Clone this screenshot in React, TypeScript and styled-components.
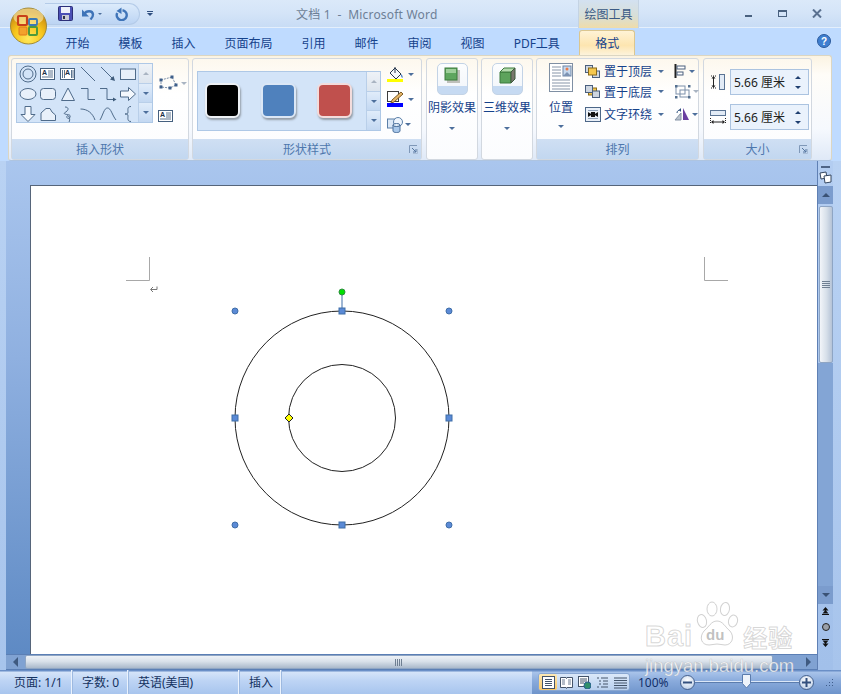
import React, { type FC, type ReactNode } from 'react'
import styled, { createGlobalStyle } from 'styled-components'

const GlobalStyle = createGlobalStyle`
  html, body {
    margin: 0;
    height: 100%;
    overflow: hidden;
  }
  * {
    box-sizing: border-box;
  }
`

const Window = styled.div`
  color: #15428b;
  display: flex;
  flex-direction: column;
  font-family: 'Noto Sans', 'Noto Sans CJK SC', sans-serif;
  font-size: 12px;
  height: 694px;
  overflow: hidden;
  position: relative;
  width: 841px;
`

/* title row */
const TitleBar = styled.div`
  align-items: center;
  background: linear-gradient(#dbe9f9, #d5e5f8 45%, #c8dcf5);
  border-bottom: 1px solid #e4effc;
  display: flex;
  flex: none;
  height: 28px;
  padding-left: 45px;
`

const OfficeButton = styled.div`
  border-radius: 50%;
  height: 38px;
  left: 10px;
  position: absolute;
  top: 7px;
  width: 37px;
  z-index: 3;
`

const QuickAccess = styled.div`
  align-items: center;
  background: linear-gradient(#dcebfb, #bcd4f3);
  border: 1px solid #b4cbe8;
  border-left: 0;
  border-radius: 0 12px 12px 0;
  display: flex;
  height: 22px;
  padding-left: 13px;
  width: 95px;
`

const UndoSlot = styled.div`
  align-items: center;
  display: flex;
  gap: 3px;
  margin-left: 8px;
`

const RedoSlot = styled.div`
  margin-left: 12px;
`

const QatMenu = styled.div`
  align-items: center;
  display: flex;
  flex-direction: column;
  margin-left: 7px;
  row-gap: 1px;
`

const QatMenuBar = styled.span`
  background: #2f4f80;
  height: 1px;
  width: 6px;
`

const Title = styled.div`
  color: #6d7f96;
  font-size: 12px;
  letter-spacing: 0.2px;
  margin-left: 143px;
  white-space: pre;
  width: 282px;
`

const ContextTab = styled.div`
  align-items: center;
  background: linear-gradient(#d3e1f1, #d8dfd8 55%, #efdcaa);
  border-left: 1px solid #c4d3e3;
  border-right: 1px solid #c4d3e3;
  color: #3a5a85;
  display: flex;
  height: 28px;
  justify-content: center;
  width: 61px;
`

const WindowButtons = styled.div`
  align-items: center;
  display: flex;
  margin-left: 92px;
`

const WindowButton = styled.div`
  align-items: center;
  display: flex;
  height: 20px;
  justify-content: center;
  width: 34.5px;
`

/* tabs */
const TabRow = styled.div`
  align-items: flex-end;
  background: #bfdbff;
  display: flex;
  flex: none;
  height: 27px;
  padding-left: 51px;
  position: relative;
`

const Tab = styled.div`
  align-items: center;
  display: flex;
  height: 25px;
  padding: 0 14.5px;
`

const ActiveTab = styled(Tab)`
  background: linear-gradient(#fff3d6, #fde5b0 60%, #fdf3dc);
  border: 1px solid #dbc68f;
  border-bottom: 0;
  border-radius: 3px 3px 0 0;
  justify-content: center;
  margin-left: 5px;
  padding: 0;
  width: 56px;
`

const HelpSlot = styled.div`
  position: absolute;
  right: 10px;
  top: 6px;
`

/* ribbon */
const RibbonFrame = styled.div`
  background: #bfdbff;
  flex: none;
  height: 106px;
  padding: 0 9px 0 8px;
`

const Ribbon = styled.div`
  background: linear-gradient(#fbf3e2, #fffdf8 18%, #f6f9fe 70%, #dfe9f7);
  border: 1px solid #dcd6c2;
  border-bottom-color: #aec4e0;
  border-radius: 3px;
  display: flex;
  height: 106px;
  padding: 2px 2px;
`

const Group = styled.div<{ $w: number; $gap?: number }>`
  background: linear-gradient(#fdf8ee, #ffffff 35%, #fbfcfe);
  border: 1px solid #d2d8e0;
  border-radius: 3px;
  display: flex;
  flex: none;
  flex-direction: column;
  height: 102px;
  margin-right: ${(p) => p.$gap ?? 3}px;
  position: relative;
  width: ${(p) => p.$w}px;
`

const GroupBody = styled.div`
  display: flex;
  flex: 1;
  min-height: 0;
`

const GroupLabel = styled.div`
  align-items: center;
  background: linear-gradient(#cfdff3, #c2d7f0);
  color: #4d77ad;
  display: flex;
  flex: none;
  height: 20px;
  justify-content: center;
`

const Launcher = styled.div`
  bottom: 5px;
  height: 9px;
  position: absolute;
  right: 3px;
  width: 9px;
`

const Gallery = styled.div<{ $w: number; $h: number; $ml: number; $mt: number }>`
  background: #d3e4f8;
  border: 1px solid #aec8e6;
  display: flex;
  flex: none;
  height: ${(p) => p.$h}px;
  margin: ${(p) => p.$mt}px 0 0 ${(p) => p.$ml}px;
  width: ${(p) => p.$w}px;
`

const ShapeGrid = styled.div`
  display: grid;
  flex: 1;
  grid-template-columns: repeat(6, 20px);
  grid-template-rows: repeat(3, 20px);
  padding-left: 1px;
`

const ShapeCell = styled.div`
  align-items: center;
  display: flex;
  justify-content: center;
`

const GalleryScroll = styled.div`
  border-left: 1px solid #b9cfe9;
  display: flex;
  flex: none;
  flex-direction: column;
  width: 14px;
`

const ScrollStep = styled.div<{ $muted?: boolean }>`
  align-items: center;
  background: ${(p) =>
    p.$muted ? 'linear-gradient(#eef2f7, #dde5ee)' : 'linear-gradient(#e0ecfa, #c3d8f2)'};
  border-bottom: 1px solid #b9cfe9;
  display: flex;
  flex: 1;
  justify-content: center;
  &:last-child {
    border-bottom: 0;
  }
`

const Triangle = styled.span<{ $up?: boolean; $color?: string; $size?: number }>`
  border-left: ${(p) => p.$size ?? 3}px solid transparent;
  border-right: ${(p) => p.$size ?? 3}px solid transparent;
  ${(p) => (p.$up ? 'border-bottom' : 'border-top')}: ${(p) => p.$size ?? 3}px solid ${(p) => p.$color ?? '#4d6f9c'};
  display: inline-block;
  flex: none;
  height: 0;
  width: 0;
`

const ToolColumn = styled.div`
  align-items: flex-start;
  display: flex;
  flex-direction: column;
  padding: 15px 0 0 5px;
  row-gap: 17px;
`

const ToolLine = styled.div<{ $gap?: number }>`
  align-items: center;
  display: flex;
  gap: ${(p) => p.$gap ?? 3}px;
`

const SwatchRow = styled.div`
  align-items: center;
  display: flex;
  flex: 1;
  gap: 21px;
  padding: 0 0 2px 7px;
`

const Swatch = styled.div<{ $fill: string; $ring: string }>`
  background: ${(p) => p.$fill};
  border: 2px solid ${(p) => p.$ring};
  border-radius: 6px;
  box-shadow: 1px 2px 2px rgba(70, 70, 70, 0.45);
  height: 35px;
  width: 35px;
`

const PaintColumn = styled.div`
  align-items: flex-start;
  display: flex;
  flex-direction: column;
  margin-left: 6px;
  padding-top: 7px;
  row-gap: 9px;
`

const EffectButton = styled.div`
  align-items: center;
  display: flex;
  flex: 1;
  flex-direction: column;
  padding-top: 4px;
`

const PositionButton = styled(EffectButton)`
  flex: none;
  margin-left: 12px;
`

const EffectFace = styled.div`
  align-items: flex-start;
  background: linear-gradient(#fcfdfe 0, #f4f7fb 72%, #c6daf2 72%);
  border: 1px solid #c3d3e6;
  border-radius: 5px;
  display: flex;
  height: 32px;
  justify-content: center;
  padding-top: 3px;
  width: 31px;
`

const EffectText = styled.div`
  line-height: 14px;
  margin-top: 6px;
  white-space: nowrap;
`

const PositionText = styled(EffectText)`
  margin-top: 8px;
`

const ArrowSlot = styled.div`
  display: flex;
  justify-content: center;
  margin-top: 12px;
`

const PositionArrow = styled(ArrowSlot)`
  margin-top: 10px;
`

const ArrangeRows = styled.div`
  align-items: center;
  column-gap: 3px;
  display: grid;
  grid-template-columns: 16px 48px 12px 24px;
  grid-template-rows: 20px 21px 24px;
  margin-left: 12px;
  padding-top: 2px;
`

const ArrowCell = styled.div`
  display: flex;
  justify-content: center;
`

const IconWithArrow = styled.div`
  align-items: center;
  display: flex;
  gap: 2px;
  margin-left: 4px;
`

const SizeRows = styled.div`
  display: flex;
  flex: 1;
  flex-direction: column;
  padding: 10px 2px 0 6px;
  row-gap: 9px;
`

const SizeRow = styled.div`
  align-items: center;
  display: flex;
  justify-content: space-between;
`

const SizeInput = styled.div`
  align-items: center;
  background: #eaf2fc;
  border: 1px solid #abc3e0;
  color: #222;
  display: flex;
  height: 26px;
  justify-content: space-between;
  padding: 0 5px 0 3px;
  width: 79px;
`

const Spinner = styled.div`
  display: flex;
  flex-direction: column;
  margin-right: 2px;
  row-gap: 7px;
`

/* workspace */
const Workspace = styled.div`
  background: linear-gradient(#b9d2f3, #a7c4ec);
  display: flex;
  flex: 1;
  min-height: 0;
  padding: 0 8px 0 6px;
`

const MainPane = styled.div`
  display: flex;
  flex: 1;
  flex-direction: column;
  min-width: 0;
`

const DocArea = styled.div`
  background: linear-gradient(#aac6ee, #8fb0e0 40%, #5e8ac4);
  flex: 1;
  min-height: 0;
  padding: 24px 0 0 24px;
`

const Page = styled.div`
  background: #fff;
  border-left: 1px solid #56657a;
  border-top: 1px solid #56657a;
  height: 100%;
`

const Drawing = styled.svg`
  display: block;
  height: 100%;
  width: 100%;
`

const HScroll = styled.div`
  align-items: stretch;
  background: #80a2d2;
  border-bottom: 1px solid #5b7fb5;
  border-top: 1px solid #5b7fb5;
  display: flex;
  flex: none;
  height: 16px;
`

const HArrow = styled.div`
  align-items: center;
  display: flex;
  flex: none;
  justify-content: center;
  width: 18px;
`

const SideTriangle = styled.span<{ $left?: boolean }>`
  border-bottom: 5px solid transparent;
  border-top: 5px solid transparent;
  ${(p) => (p.$left ? 'border-right' : 'border-left')}: 5px solid #3f5a80;
  display: inline-block;
  height: 0;
  width: 0;
`

const HThumb = styled.div`
  align-items: center;
  background: linear-gradient(#eef2f7, #d9e1ea 45%, #aab9cb);
  border: 1px solid #8ea5c4;
  border-radius: 2px;
  display: flex;
  justify-content: center;
  margin-left: 1px;
  width: 748px;
`

const HTrack = styled.div`
  flex: 1;
`

const Grip = styled.div<{ $vertical?: boolean }>`
  background: repeating-linear-gradient(
    ${(p) => (p.$vertical ? '0deg' : '90deg')},
    #6f7f92 0 1px,
    transparent 1px 2px
  );
  height: 7px;
  width: 8px;
`

const VScroll = styled.div`
  align-items: center;
  background: linear-gradient(#b3cdf1, #a2c0ea);
  border-left: 1px solid #5f80b4;
  display: flex;
  flex: none;
  flex-direction: column;
  width: 16px;
`

const SplitBar = styled.div`
  background: #4f6587;
  flex: none;
  height: 2px;
  margin-top: 5px;
  width: 9px;
`

const RulerIcon = styled.div`
  flex: none;
  height: 13px;
  margin-top: 3px;
`

const VArrowBox = styled.div<{ $top?: boolean }>`
  align-items: center;
  background: #7b9ccd;
  display: flex;
  flex: none;
  height: 18px;
  justify-content: center;
  margin-top: ${(p) => (p.$top ? '2px' : '0')};
  width: 100%;
`

const VThumb = styled.div`
  align-items: center;
  background: linear-gradient(90deg, #f2f5f9, #d6dfe9 55%, #b5c3d6);
  border: 1px solid #8ea5c4;
  border-radius: 2px;
  display: flex;
  flex: none;
  height: 157px;
  justify-content: center;
  margin-top: 2px;
  width: 14px;
`

const VTrack = styled.div`
  background: #83a5d5;
  flex: 1;
  width: 100%;
`

const BrowseGroup = styled.div`
  align-items: center;
  display: flex;
  flex: none;
  flex-direction: column;
  height: 66px;
  padding-top: 3px;
  row-gap: 8px;
  width: 100%;
`

/* status bar */
const StatusBar = styled.div`
  background: linear-gradient(#6a8fc7 0, #6a8fc7 1px, #d5e4f9 2px, #bdd4f4 45%, #a8c5ee);
  color: #15325f;
  display: flex;
  flex: none;
  height: 24px;
`

const StatusCell = styled.div<{ $w: number; $pad?: number }>`
  align-items: center;
  border-right: 1px solid #eaf2fd;
  box-shadow: 1px 0 0 #9db9e0;
  display: flex;
  flex: none;
  padding-left: ${(p) => p.$pad ?? 10}px;
  width: ${(p) => p.$w}px;
`

const StatusRight = styled.div`
  align-items: center;
  background: linear-gradient(#6a8fc7 0, #6a8fc7 1px, #a9c4ea 2px, #8aabdc 45%, #6e94cb);
  display: flex;
  flex: 1;
  margin-left: 251px;
  padding-left: 6px;
`

const ViewButtons = styled.div`
  background: linear-gradient(#dbe8f9, #b9d0ef);
  border: 1px solid #89a7d2;
  border-radius: 3px;
  display: flex;
  flex: none;
  height: 18px;
  width: 92px;
`

const ViewButton = styled.div<{ $active?: boolean }>`
  align-items: center;
  background: ${(p) => (p.$active ? 'linear-gradient(#fde9b5, #fbc765)' : 'transparent')};
  border-radius: 2px;
  display: flex;
  flex: 1;
  justify-content: center;
`

const ZoomText = styled.div`
  color: #12306a;
  font-size: 12px;
  margin-left: 8px;
  width: 42px;
`

const ZoomCircle = styled.div`
  align-items: center;
  background: radial-gradient(circle at 50% 35%, #fff, #c9d8ec 70%, #8ea8cc);
  border: 1px solid #46618d;
  border-radius: 50%;
  display: flex;
  flex: none;
  height: 15px;
  justify-content: center;
  width: 15px;
`

const ZoomTrack = styled.div`
  background: #dbe7f7;
  border-bottom: 1px solid #5b7cad;
  flex: none;
  height: 2px;
  position: relative;
  width: 104px;
`

const ZoomThumb = styled.div`
  left: 47px;
  position: absolute;
  top: -7px;
`

const ResizeGrip = styled.div`
  margin-left: 10px;
`

/* watermark */
const Watermark = styled.div`
  color: rgba(255, 255, 255, 0.82);
  display: flex;
  flex-direction: column;
  font-family: 'Liberation Sans', sans-serif;
  left: 645px;
  pointer-events: none;
  position: absolute;
  top: 600px;
  width: 155px;
  z-index: 4;
`

const LogoLine = styled.div`
  align-items: flex-end;
  display: flex;
  height: 51px;
  position: relative;
`

const LogoText = styled.span`
  -webkit-text-stroke: 1px rgba(140, 140, 140, 0.35);
  font-size: 29px;
  font-weight: 700;
  letter-spacing: 1px;
  line-height: 29px;
`

const LogoCjk = styled(LogoText)`
  font-family: 'Noto Sans CJK SC', sans-serif;
  font-size: 24px;
  letter-spacing: 1px;
  margin-left: 2px;
`

const PawSlot = styled.div`
  height: 50px;
  margin: 0 2px;
  width: 44px;
`

const DomainText = styled.div`
  -webkit-text-stroke: 0.6px rgba(140, 140, 140, 0.35);
  font-size: 18.5px;
  line-height: 24px;
  margin-top: 3px;
  white-space: nowrap;
`

const IconSvg = styled.svg`
  display: block;
  flex: none;
`

/* drawings */
const Ico: FC<{ w?: number; h?: number; children: ReactNode }> = ({ w = 18, h = 18, children }) => (
  <IconSvg width={w} height={h} viewBox={`0 0 ${w} ${h}`} fill="none">
    {children}
  </IconSvg>
)

const LINE = '#4f6b8a'

const TextBoxGlyph: FC<{ vertical?: boolean }> = ({ vertical }) => (
  <Ico w={16} h={14}>
    <rect x=".5" y="1.5" width="14" height="11" fill="#fff" stroke="#45607f" />
    {vertical ? (
      <path d="M2.5 3v8M4.5 3v8M11.5 3v8M13 3v8" stroke="#5c7590" />
    ) : (
      <path d="M8 4h5M8 6h5M8 8h5M2 10h11" stroke="#5c7590" />
    )}
    <text x={vertical ? 5 : 2} y="8" fontSize="7" fontWeight="700" fontFamily="Liberation Sans" fill="#1d2f48">
      A
    </text>
  </Ico>
)

const shapes: ReactNode[] = [
  <Ico key="donut"><circle cx="9" cy="9" r="8" stroke={LINE} /><circle cx="9" cy="9" r="5" stroke={LINE} /></Ico>,
  <TextBoxGlyph key="text" />,
  <TextBoxGlyph key="vtext" vertical />,
  <Ico key="line"><path d="M2 2l14 14" stroke={LINE} /></Ico>,
  <Ico key="arrow"><path d="M2 2l13 13" stroke={LINE} /><path d="M16 16l-5-1.5 3.5-3.5z" fill="#3d5a7a" /></Ico>,
  <Ico key="rect"><rect x="1.5" y="4" width="15" height="10.5" fill="#e8f0fa" stroke={LINE} /></Ico>,
  <Ico key="ellipse"><ellipse cx="9" cy="9" rx="8" ry="5.5" fill="#e8f0fa" stroke={LINE} /></Ico>,
  <Ico key="round"><rect x="1.5" y="3.5" width="15" height="11" rx="3" fill="#e8f0fa" stroke={LINE} /></Ico>,
  <Ico key="tri"><path d="M9 3l6.5 12.5h-13z" fill="#e8f0fa" stroke={LINE} /></Ico>,
  <Ico key="elbow"><path d="M2 3.5h7v11h7" stroke={LINE} /></Ico>,
  <Ico key="elbow2"><path d="M1 3.5h7v11h7" stroke={LINE} /><path d="M17.5 14.5l-3.5-2v4z" fill="#3d5a7a" /></Ico>,
  <Ico key="block"><path d="M1.5 6h8V2.5l7 6.5-7 6.5V12h-8z" fill="#f4f8fd" stroke={LINE} /></Ico>,
  <Ico key="down"><path d="M6 1.5h6v8h4l-7 7-7-7h4z" fill="#f4f8fd" stroke={LINE} /></Ico>,
  <Ico key="snip"><path d="M2 15.5V8l5-4.5h4l2 3.5 3.5 3v5.5z" fill="#e8f0fa" stroke={LINE} /></Ico>,
  <Ico key="squiggle"><path d="M6 2c3 0 4 2 2 4S4 8 6 9s6 0 5 3-4 1-3-1 4 3 2 6" stroke={LINE} /></Ico>,
  <Ico key="arc"><path d="M1.5 4c7 0 12 4 14.5 11" stroke={LINE} /></Ico>,
  <Ico key="curve"><path d="M1 15C4 10 5 3 8.5 3S13 10 17 15" stroke={LINE} /></Ico>,
  <Ico key="brace"><path d="M12 1.5C8 1.5 9 5 9 7S8 9 6 9c2 0 3 0 3 2s-1 5.5 3 5.5" stroke={LINE} /></Ico>,
]

const SaveIcon = () => (
  <Ico w={15} h={15}>
    <rect x=".5" y=".5" width="14" height="14" rx="1" fill="#4b50b5" stroke="#2c2f78" />
    <rect x="3" y="1" width="9" height="6" fill="#eef1fa" />
    <rect x="4" y="9" width="7" height="5" fill="#c9ccd6" />
    <rect x="5" y="10" width="2" height="3" fill="#30344a" />
  </Ico>
)

const UndoIcon = () => (
  <Ico w={14} h={14}>
    <path d="M3.5 7C5 3.500 11.500 3 12 7.500c.2 2-1 3.500-2.500 5" stroke="#3f74b8" strokeWidth="2.4" />
    <path d="M1 2.500v7h7z" fill="#3f74b8" />
  </Ico>
)

const RedoIcon = () => (
  <Ico w={14} h={14}>
    <path d="M8.500 3.200A5 5 0 1 1 3.200 6" stroke="#3f74b8" strokeWidth="2.4" />
    <path d="M7.500 .5v6.500l-5-3z" fill="#3f74b8" />
  </Ico>
)

const OfficeLogo = () => (
  <Ico w={37} h={38}>
    <defs>
      <radialGradient id="orb" cx="50%" cy="85%" r="75%">
        <stop offset="0" stopColor="#ffe95c" />
        <stop offset=".55" stopColor="#f7c51c" />
        <stop offset="1" stopColor="#c98a10" />
      </radialGradient>
    </defs>
    <circle cx="18.5" cy="19" r="18" fill="url(#orb)" stroke="#9f8a3a" />
    <ellipse cx="18.5" cy="10" rx="15" ry="8.5" fill="#fff6c4" opacity=".55" />
    <rect x="8" y="9" width="9" height="9" rx="1" fill="none" stroke="#c8401a" strokeWidth="2.2" />
    <rect x="19" y="12" width="8" height="6" rx="1" fill="none" stroke="#3a79b6" strokeWidth="1.8" />
    <rect x="9" y="20" width="8" height="8" rx="1" fill="#f3a22c" stroke="#e07a1c" />
    <rect x="19" y="20" width="8" height="8" rx="1" fill="none" stroke="#4f9a3b" strokeWidth="2" />
  </Ico>
)

const EditPoints = () => (
  <Ico w={20} h={18}>
    <path d="M3 6l11-3 4 8-6 3-9-1z" stroke="#7a8ea8" strokeDasharray="2 1" />
    {[[3, 6], [14, 3], [18, 11], [12, 14], [3, 13]].map(([x, y]) => (
      <rect key={`${x}-${y}`} x={x - 1.5} y={y - 1.5} width="3" height="3" fill="#3e5f8a" />
    ))}
  </Ico>
)

const Launch = () => (
  <Ico w={9} h={9}>
    <path d="M.5 8V.5H8" stroke="#7f98b8" />
    <path d="M3 3l4 4M7 4v3H4" stroke="#55759e" />
    <path d="M8.5 4v4.5H4" stroke="#a9bdd6" />
  </Ico>
)

const Bucket = () => (
  <Ico w={17} h={16}>
    <path d="M3 7l5-5 6 6-5 5z" fill="#f5f7fb" stroke="#26364c" />
    <path d="M8 7V1" stroke="#26364c" />
    <path d="M14 8c1.5 1 2 3 1.5 4-1-.5-2-2-1.500-4z" fill="#4a7fc1" />
    <rect y="13" width="16" height="3" fill="#ffff00" />
  </Ico>
)

const Pen = () => (
  <Ico w={17} h={16}>
    <rect x=".5" y=".5" width="11" height="10" fill="#fff" stroke="#3c3c3c" />
    <path d="M5 9l9-8 2 2-9 8-3 1z" fill="#e6b66a" stroke="#7c5a22" />
    <rect y="12" width="16" height="4" fill="#0000ff" />
  </Ico>
)

const Cylinder = () => (
  <Ico w={17} h={17}>
    <rect x=".5" y="3" width="9" height="9" fill="#dbe8f7" stroke="#5b7fa8" />
    <circle cx="11" cy="6" r="4.5" fill="#eef5fd" stroke="#5b7fa8" />
    <path d="M6 9v6c0 2 7 2 7 0V9c0 2-7 2-7 0z" fill="#a9c8ea" stroke="#4a6f9c" />
    <ellipse cx="9.5" cy="9" rx="3.5" ry="1.5" fill="#e4eff9" stroke="#4a6f9c" />
  </Ico>
)

const ShadowSquare = () => (
  <Ico w={17} h={17}>
    <rect x="3" y="3" width="13" height="13" fill="#a8a8a0" opacity=".7" />
    <rect x="1" y="1" width="12" height="12" fill="#5ea65e" stroke="#3c7a3c" />
    <rect x="2" y="2" width="10" height="4" fill="#9ecf9a" />
  </Ico>
)

const Cube = () => (
  <Ico w={17} h={17}>
    <path d="M1 5h11v11H1z" fill="#5da35c" stroke="#3c7a3c" />
    <path d="M1 5l4-4h11l-4 4z" fill="#b5dcae" stroke="#3c7a3c" />
    <path d="M12 5l4-4v11l-4 4z" fill="#78766c" stroke="#3c5a3c" />
  </Ico>
)

const PositionIcon = () => (
  <Ico w={24} h={30}>
    <rect x=".5" y=".5" width="23" height="28" fill="#fff" stroke="#7f8fa3" />
    <path d="M3 4h9M3 7h9M3 10h9M3 13h9M3 17h18M3 20h18M3 23h18M3 26h18" stroke="#8795a8" />
    <rect x="14" y="3" width="8" height="10" fill="#c7d9ee" stroke="#6e86a6" />
    <circle cx="18" cy="6" r="1.5" fill="#e97b4a" />
    <path d="M14 13l4-4 4 4z" fill="#7d93b3" />
  </Ico>
)

const LayerIcon: FC<{ front: boolean }> = ({ front }) => (
  <Ico w={15} h={13}>
    {front ? (
      <>
        <rect x=".5" y=".5" width="7" height="7" fill="#cfd6df" stroke="#4a5f7d" />
        <rect x="7.5" y="6" width="7" height="6.5" fill="#cfd6df" stroke="#4a5f7d" />
        <rect x="3.5" y="3" width="8" height="7" fill="#f5c84e" stroke="#8a6a1a" />
      </>
    ) : (
      <>
        <rect x="3.5" y="3" width="8" height="7" fill="#f5c84e" stroke="#8a6a1a" />
        <rect x=".5" y=".5" width="7" height="7" fill="#cfd6df" stroke="#4a5f7d" />
        <rect x="7.5" y="6" width="7" height="6.5" fill="#cfd6df" stroke="#4a5f7d" />
      </>
    )}
  </Ico>
)

const WrapIcon = () => (
  <Ico w={16} h={15}>
    <rect x=".5" y=".5" width="15" height="14" fill="#eaf0f8" stroke="#4d6788" />
    <path d="M3 3.5h10M3 11.5h10" stroke="#8fa1b8" />
    <path d="M3 5l4 2.5L3 10zM13 5L9 7.5l4 2.5z" fill="#111" />
    <rect x="6" y="5" width="4" height="5" fill="#111" />
  </Ico>
)

const AlignIcon = () => (
  <Ico w={13} h={14}>
    <path d="M1.5 0v14" stroke="#222" strokeWidth="2" />
    <rect x="3" y="2" width="8" height="3" fill="#fff" stroke="#4a5f7d" />
    <rect x="3" y="8" width="6" height="3" fill="#fff" stroke="#4a5f7d" />
  </Ico>
)

const GroupIcon = () => (
  <Ico w={17} h={15}>
    <rect x="2" y="2" width="9" height="8" stroke="#7d90aa" />
    <rect x="6" y="6" width="9" height="7" stroke="#7d90aa" />
    {[[1, 1], [14, 1], [1, 12], [14, 12]].map(([x, y]) => (
      <rect key={`${x}-${y}`} x={x} y={y} width="2.5" height="2.5" fill="#55708f" />
    ))}
  </Ico>
)

const RotateIcon = () => (
  <Ico w={16} h={14}>
    <path d="M9 1l6 12H9z" fill="#6a3fa0" />
    <path d="M1 13l6-7v7z" fill="#b9c2cd" stroke="#8593a5" />
    <path d="M3 6c0-2 1.5-3 3-3" stroke="#2c4f7c" />
    <path d="M7 1L5 3l2 2z" fill="#2c4f7c" />
  </Ico>
)

const HeightIcon = () => (
  <Ico w={15} h={16}>
    <path d="M1 2h5M1 14h5" stroke="#222" strokeDasharray="1 1" />
    <path d="M3.5 3v10" stroke="#222" />
    <path d="M3.5 2l-2 2.500h4zM3.5 14l-2-2.500h4z" fill="#222" />
    <rect x="9.5" y=".5" width="5" height="15" fill="#e2ebf6" stroke="#5b7494" />
  </Ico>
)

const WidthIcon = () => (
  <Ico w={16} h={15}>
    <rect x=".5" y=".5" width="15" height="5" fill="#e2ebf6" stroke="#5b7494" />
    <path d="M2 12h12" stroke="#222" />
    <path d="M1 12l2.500-2v4zM15 12l-2.500-2v4z" fill="#222" />
    <path d="M.5 8v6M15.5 8v6" stroke="#222" strokeDasharray="1 1" />
  </Ico>
)

const ViewIcon: FC<{ kind: string }> = ({ kind }) => (
  <Ico w={13} h={13}>
    {kind === 'print' && (
      <>
        <rect x=".5" y=".5" width="12" height="12" fill="#fff" stroke="#44546a" />
        <path d="M3 3.5h7M3 5.5h7M3 7.5h7M3 9.5h7" stroke="#44546a" />
      </>
    )}
    {kind === 'read' && (
      <>
        <path d="M.5 1.5H6l.5 1 .5-1h5.5v10H7l-.5 1-.5-1H.5z" fill="#fff" stroke="#44546a" />
        <path d="M2 4h3M2 6h3M2 8h3M8 4h3M8 6h3M8 8h3" stroke="#6a7a90" />
      </>
    )}
    {kind === 'web' && (
      <>
        <rect x=".5" y=".5" width="10" height="10" fill="#fff" stroke="#44546a" />
        <path d="M2 3h7M2 5h7M2 7h4" stroke="#44546a" />
        <circle cx="9.5" cy="9.5" r="3.5" fill="#2f8f6a" stroke="#2a5f8f" />
      </>
    )}
    {kind === 'outline' && <path d="M1 2h2M5 2h7M3 5h2M7 5h5M3 8h2M7 8h5M1 11h2M5 11h7" stroke="#44546a" />}
    {kind === 'draft' && <path d="M0 2h13M0 4.5h13M0 7h13M0 9.5h13M0 12h13" stroke="#44546a" />}
  </Ico>
)

const BrowseIcon: FC<{ kind: 'up' | 'dot' | 'down' }> = ({ kind }) =>
  kind === 'dot' ? (
    <Ico w={8} h={8}>
      <circle cx="4" cy="4" r="3.5" fill="#9aa0a8" stroke="#222" />
    </Ico>
  ) : (
    <Ico w={7} h={8}>
      <g transform={kind === 'down' ? 'translate(0 8) scale(1 -1)' : undefined}>
        <path d="M3.5 0l3 3.5h-6zM3.5 3l3 3.5h-6z" fill="#111" />
        <path d="M0 7.5h7" stroke="#111" />
      </g>
    </Ico>
  )

const PawLogo = () => (
  <Ico w={44} h={50}>
    <g fill="rgba(255,255,255,.75)" stroke="rgba(140,140,140,.4)">
      <ellipse cx="7" cy="20" rx="4.5" ry="6.5" transform="rotate(-15 7 20)" />
      <ellipse cx="17" cy="8" rx="5" ry="7" />
      <ellipse cx="30" cy="8" rx="4.5" ry="6.5" transform="rotate(10 30 8)" />
      <ellipse cx="38" cy="20" rx="4.5" ry="6" transform="rotate(15 38 20)" />
      <path d="M22 20c6 0 8 6 13 10 5 6 2 14-5 14-3 0-5-1-8-1s-5 1-8 1c-8 0-10-8-5-14 5-4 7-10 13-10z" />
    </g>
    <text x="11" y="39" fontSize="15" fontFamily="Liberation Sans" fontWeight="700" fill="rgba(140,140,140,.55)">
      du
    </text>
  </Ico>
)

const tabs = ['开始', '模板', '插入', '页面布局', '引用', '邮件', '审阅', '视图', 'PDF工具']
const cornerHandles = [[205, 126], [419, 126], [205, 340], [419, 340]]
const sideHandles = [[312, 126], [205, 233], [419, 233], [312, 340]]

const App: FC = () => (
  <>
    <GlobalStyle />
    <Window>
      <OfficeButton>
        <OfficeLogo />
      </OfficeButton>

      <TitleBar>
        <QuickAccess>
          <SaveIcon />
          <UndoSlot>
            <UndoIcon />
            <Triangle $size={2} />
          </UndoSlot>
          <RedoSlot>
            <RedoIcon />
          </RedoSlot>
        </QuickAccess>
        <QatMenu>
          <QatMenuBar />
          <Triangle $size={3} $color="#2f4f80" />
        </QatMenu>
        <Title>文档 1  -  Microsoft Word</Title>
        <ContextTab>绘图工具</ContextTab>
        <WindowButtons>
          <WindowButton>
            <Ico w={9} h={9}><path d="M1 7h7" stroke="#49617f" strokeWidth="2" /></Ico>
          </WindowButton>
          <WindowButton>
            <Ico w={10} h={9}><rect x=".5" y="1.5" width="8" height="6" stroke="#49617f" /><path d="M1 2h7" stroke="#49617f" strokeWidth="2" /></Ico>
          </WindowButton>
          <WindowButton>
            <Ico w={10} h={9}><path d="M1 .5l8 8M9 .5l-8 8" stroke="#5a7190" strokeWidth="2" /></Ico>
          </WindowButton>
        </WindowButtons>
      </TitleBar>

      <TabRow>
        {tabs.map((t) => (
          <Tab key={t}>{t}</Tab>
        ))}
        <ActiveTab>格式</ActiveTab>
        <HelpSlot>
          <Ico w={14} h={14}>
            <circle cx="7" cy="7" r="6.5" fill="#3f7fd0" stroke="#2b5a9c" />
            <text x="7" y="10.5" textAnchor="middle" fontSize="10" fontWeight="700" fontFamily="Liberation Sans" fill="#fff">?</text>
          </Ico>
        </HelpSlot>
      </TabRow>

      <RibbonFrame>
        <Ribbon>
          <Group $w={178}>
            <GroupBody>
              <Gallery $w={137} $h={60} $ml={4} $mt={4}>
                <ShapeGrid>
                  {shapes.map((s, i) => (
                    <ShapeCell key={i}>{s}</ShapeCell>
                  ))}
                </ShapeGrid>
                <GalleryScroll>
                  <ScrollStep $muted><Triangle $up $color="#a9b4c2" /></ScrollStep>
                  <ScrollStep><Triangle /></ScrollStep>
                  <ScrollStep><Triangle /></ScrollStep>
                </GalleryScroll>
              </Gallery>
              <ToolColumn>
                <ToolLine>
                  <EditPoints />
                  <Triangle $color="#a9b4c2" />
                </ToolLine>
                <TextBoxGlyph />
              </ToolColumn>
            </GroupBody>
            <GroupLabel>插入形状</GroupLabel>
          </Group>

          <Group $w={230} $gap={4}>
            <GroupBody>
              <Gallery $w={184} $h={60} $ml={4} $mt={12}>
                <SwatchRow>
                  <Swatch $fill="#000" $ring="#eef1f5" />
                  <Swatch $fill="#4f81bd" $ring="#dbe7f6" />
                  <Swatch $fill="#c0504d" $ring="#f3dcdc" />
                </SwatchRow>
                <GalleryScroll>
                  <ScrollStep $muted><Triangle $up $color="#a9b4c2" /></ScrollStep>
                  <ScrollStep><Triangle /></ScrollStep>
                  <ScrollStep><Triangle /></ScrollStep>
                </GalleryScroll>
              </Gallery>
              <PaintColumn>
                <ToolLine $gap={4}><Bucket /><Triangle /></ToolLine>
                <ToolLine $gap={4}><Pen /><Triangle /></ToolLine>
                <ToolLine $gap={1}><Cylinder /><Triangle /></ToolLine>
              </PaintColumn>
            </GroupBody>
            <GroupLabel>形状样式</GroupLabel>
            <Launcher><Launch /></Launcher>
          </Group>

          <Group $w={52}>
            <EffectButton>
              <EffectFace><ShadowSquare /></EffectFace>
              <EffectText>阴影效果</EffectText>
              <ArrowSlot><Triangle /></ArrowSlot>
            </EffectButton>
          </Group>

          <Group $w={52}>
            <EffectButton>
              <EffectFace><Cube /></EffectFace>
              <EffectText>三维效果</EffectText>
              <ArrowSlot><Triangle /></ArrowSlot>
            </EffectButton>
          </Group>

          <Group $w={163} $gap={4}>
            <GroupBody>
              <PositionButton>
                <PositionIcon />
                <PositionText>位置</PositionText>
                <PositionArrow><Triangle /></PositionArrow>
              </PositionButton>
              <ArrangeRows>
                <LayerIcon front />
                <span>置于顶层</span>
                <ArrowCell><Triangle /></ArrowCell>
                <IconWithArrow><AlignIcon /><Triangle /></IconWithArrow>
                <LayerIcon front={false} />
                <span>置于底层</span>
                <ArrowCell><Triangle /></ArrowCell>
                <IconWithArrow><GroupIcon /><Triangle $color="#a9b4c2" /></IconWithArrow>
                <WrapIcon />
                <span>文字环绕</span>
                <ArrowCell><Triangle /></ArrowCell>
                <IconWithArrow><RotateIcon /><Triangle /></IconWithArrow>
              </ArrangeRows>
            </GroupBody>
            <GroupLabel>排列</GroupLabel>
          </Group>

          <Group $w={109} $gap={0}>
            <SizeRows>
              <SizeRow>
                <HeightIcon />
                <SizeInput>
                  5.66 厘米
                  <Spinner><Triangle $up $color="#1f3f70" /><Triangle $color="#1f3f70" /></Spinner>
                </SizeInput>
              </SizeRow>
              <SizeRow>
                <WidthIcon />
                <SizeInput>
                  5.66 厘米
                  <Spinner><Triangle $up $color="#1f3f70" /><Triangle $color="#1f3f70" /></Spinner>
                </SizeInput>
              </SizeRow>
            </SizeRows>
            <GroupLabel>大小</GroupLabel>
            <Launcher><Launch /></Launcher>
          </Group>
        </Ribbon>
      </RibbonFrame>

      <Workspace>
        <MainPane>
          <DocArea>
            <Page>
              <Drawing viewBox="1 1 786 468">
                <path d="M119.5 72v23.5H96M674.5 72v23.5H698" stroke="#a8a8a8" fill="none" />
                <path d="M127 104.5h-6M123 102l-2.5 2.5 2.5 2.5M127 104.5v-3" stroke="#777" fill="none" />
                <circle cx="312" cy="233" r="107" fill="none" stroke="#222" />
                <circle cx="312" cy="233" r="53.5" fill="none" stroke="#222" />
                <path d="M312 107v19" stroke="#3f6ea8" />
                {cornerHandles.map(([x, y]) => (
                  <circle key={`${x}-${y}`} cx={x} cy={y} r="3" fill="#5b8ad6" stroke="#3f6ea8" />
                ))}
                {sideHandles.map(([x, y]) => (
                  <rect key={`${x}-${y}`} x={x - 3} y={y - 3} width="6" height="6" fill="#5b8ad6" stroke="#3f6ea8" />
                ))}
                <circle cx="312" cy="107" r="3" fill="#00e000" stroke="#2f8f3f" />
                <path d="M259 229l4 4-4 4-4-4z" fill="#ffff00" stroke="#222" />
              </Drawing>
            </Page>
          </DocArea>
          <HScroll>
            <HArrow><SideTriangle $left /></HArrow>
            <HThumb><Grip /></HThumb>
            <HTrack />
            <HArrow><SideTriangle /></HArrow>
          </HScroll>
        </MainPane>
        <VScroll>
          <SplitBar />
          <RulerIcon>
            <Ico w={13} h={13}>
              <path d="M1 2l6-1 1 6-6 1z" fill="#fff" stroke="#34465f" />
              <path d="M5 5l7-1v7l-6 1z" fill="#fff" stroke="#34465f" />
            </Ico>
          </RulerIcon>
          <VArrowBox $top><Triangle $up $size={4} $color="#3a5275" /></VArrowBox>
          <VThumb><Grip $vertical /></VThumb>
          <VTrack />
          <VArrowBox><Triangle $size={4} $color="#3a5275" /></VArrowBox>
          <BrowseGroup>
            <BrowseIcon kind="up" />
            <BrowseIcon kind="dot" />
            <BrowseIcon kind="down" />
          </BrowseGroup>
        </VScroll>
      </Workspace>

      <StatusBar>
        <StatusCell $w={72} $pad={14}>页面: 1/1</StatusCell>
        <StatusCell $w={56}>字数: 0</StatusCell>
        <StatusCell $w={111}>英语(美国)</StatusCell>
        <StatusCell $w={42}>插入</StatusCell>
        <StatusRight>
          <ViewButtons>
            <ViewButton $active><ViewIcon kind="print" /></ViewButton>
            <ViewButton><ViewIcon kind="read" /></ViewButton>
            <ViewButton><ViewIcon kind="web" /></ViewButton>
            <ViewButton><ViewIcon kind="outline" /></ViewButton>
            <ViewButton><ViewIcon kind="draft" /></ViewButton>
          </ViewButtons>
          <ZoomText>100%</ZoomText>
          <ZoomCircle>
            <Ico w={9} h={3}><path d="M0 1.5h9" stroke="#33507f" strokeWidth="2" /></Ico>
          </ZoomCircle>
          <ZoomTrack>
            <ZoomThumb>
              <Ico w={9} h={15}><path d="M.5.5h8v9L4.5 14 .5 9.5z" fill="#eef3fa" stroke="#5b7cad" /></Ico>
            </ZoomThumb>
          </ZoomTrack>
          <ZoomCircle>
            <Ico w={9} h={9}><path d="M0 4.5h9M4.5 0v9" stroke="#33507f" strokeWidth="2" /></Ico>
          </ZoomCircle>
          <ResizeGrip>
            <Ico w={10} h={10}>
              <path d="M8 2h1v1H8zM5 5h1v1H5zM8 5h1v1H8zM2 8h1v1H2zM5 8h1v1H5zM8 8h1v1H8z" fill="#3f5d8c" />
            </Ico>
          </ResizeGrip>
        </StatusRight>
      </StatusBar>

      <Watermark>
        <LogoLine>
          <LogoText>Bai</LogoText>
          <PawSlot><PawLogo /></PawSlot>
          <LogoCjk>经验</LogoCjk>
        </LogoLine>
        <DomainText>jingyan.baidu.com</DomainText>
      </Watermark>
    </Window>
  </>
)

export default App
